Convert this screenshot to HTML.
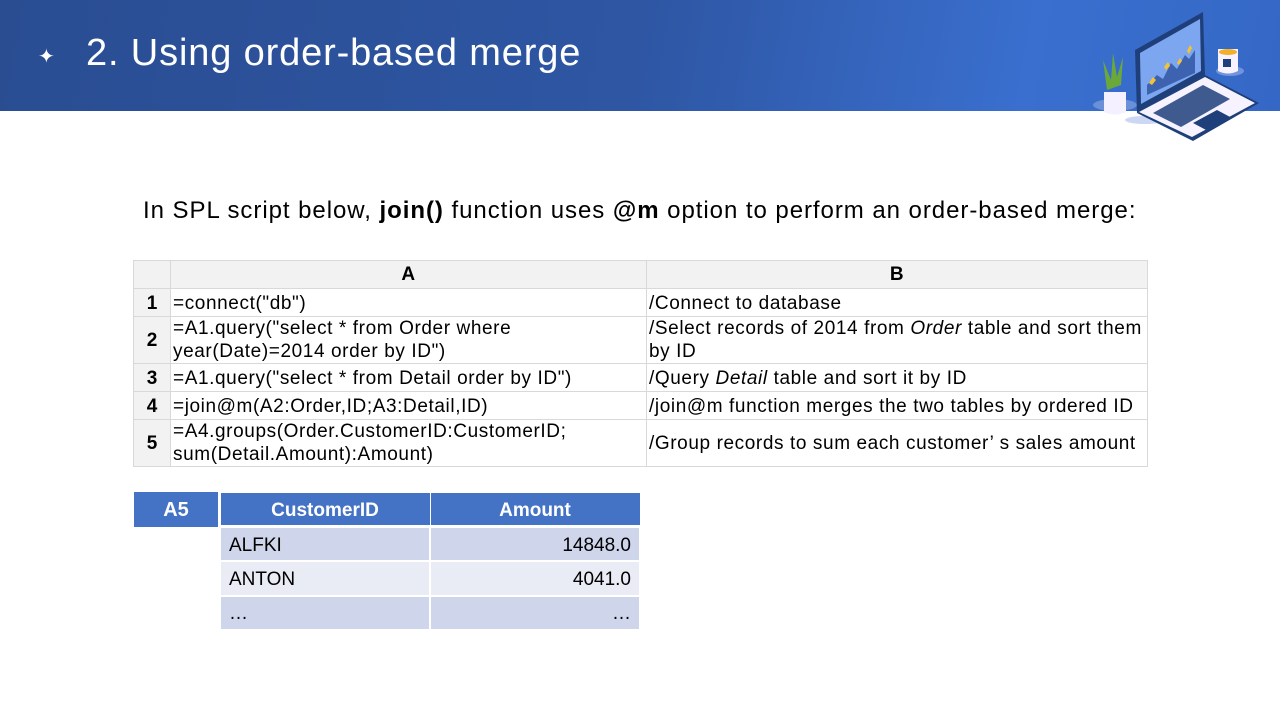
<!DOCTYPE html>
<html><head><meta charset="utf-8"><style>
*{margin:0;padding:0;box-sizing:border-box}
body{width:1280px;height:720px;background:#fff;position:relative;overflow:hidden;font-family:"Liberation Sans","Noto Sans CJK SC",sans-serif;color:#000}
.hdr{position:absolute;left:0;top:0;width:1280px;height:111px;background:linear-gradient(100deg,#2a4d92 0%,#2e56a3 50%,#3a6fcf 80%,#3568c6 100%)}
.title{position:absolute;left:86px;top:32px;color:#fff;font-size:38px;white-space:nowrap;letter-spacing:0.85px}
.star{position:absolute;left:38px;top:44px;color:#fff;font-size:20px}
.intro{position:absolute;left:143px;top:197px;font-size:24px;white-space:nowrap;letter-spacing:0.95px}
table{border-collapse:collapse;position:absolute}
.spl{left:133px;top:260px;width:1014px;font-size:19px;letter-spacing:0.6px;table-layout:fixed}
.spl td{border:1px solid #d9d9d9;padding:0 2px;line-height:23px;vertical-align:middle;white-space:nowrap;overflow:hidden}
.spl .h td{background:#f2f2f2;font-weight:bold;text-align:center;height:28px}
.spl td.n{background:#f2f2f2;font-weight:bold;text-align:center;letter-spacing:0}
.r td{height:28px;padding-top:2px}
.r2 td{height:46px}
.a5{position:absolute;left:134px;top:492px;width:84px;height:35px;background:#4472c4;color:#fff;font-weight:bold;font-size:20px;text-align:center;line-height:36px}
.res{left:219px;top:492px;font-size:19px}
.res td{width:210px;height:34.5px;border:2px solid #fff;padding:3px 8px 0}
.res th{background:#4472c4;color:#fff;font-size:19px;height:34px;border:1px solid #fff;border-bottom:3px solid #fff;padding-top:4px}
.o td{background:#cfd5ea}.e td{background:#e9ebf5}
</style></head><body>
<div class="hdr"></div>
<div class="star">✦</div>
<div class="title">2. Using order-based merge</div>
<svg style="position:absolute;left:1085px;top:5px" width="175" height="138" viewBox="0 0 175 138">
<ellipse cx="30" cy="100" rx="22" ry="6" fill="#8fa8e0" opacity=".6"/>
<path d="M22 85 L18 55 L26 75 L28 48 L32 72 L38 52 L36 80 Z" fill="#6aa83a"/>
<path d="M19 87 h22 v20 q-11 5 -22 0 Z" fill="#f4f0ff"/>
<ellipse cx="60" cy="115" rx="20" ry="4" fill="#9ab0e8" opacity=".5"/>
<path d="M50 45 L118 7 L120 70 L52 108 Z" fill="#1f3f7a"/>
<path d="M55 48 L115 14 L116 66 L56 99 Z" fill="#7ca7f0"/>
<path d="M62 80 L72 70 L78 74 L86 58 L92 64 L100 50 L104 54 L110 45 L110 68 L62 90Z" fill="#3d62b0"/>
<path d="M64 78 l4-6 3 3 -4 5Z M79 62 l4-5 2 4 -4 4Z M92 58 l3-5 2 3 -3 4Z M102 46 l3-6 2 3 -3 6Z" fill="#f5c232"/>
<path d="M52 108 L120 70 L174 98 L108 136 Z" fill="#1f3f7a"/>
<path d="M54 107 L120 72 L170 98 L107 132 Z" fill="#f6f2ff"/>
<path d="M68 108 L118 80 L145 94 L96 122 Z" fill="#1f3f7a" opacity=".85"/>
<path d="M108 118 L132 105 L147 113 L123 126 Z" fill="#1f3f7a"/>
<ellipse cx="145" cy="66" rx="14" ry="5" fill="#9ab0e8" opacity=".6"/>
<path d="M133 44 h20 v22 q-10 5 -20 0 Z" fill="#f6f2ff"/>
<ellipse cx="143" cy="47" rx="9" ry="3" fill="#f2b02a"/>
<rect x="138" y="54" width="8" height="8" fill="#1f3f7a"/>
</svg>
<div class="intro">In SPL script below, <b>join()</b> function uses <b>@m</b> option to perform an order-based merge:</div>
<table class="spl">
<colgroup><col style="width:37px"><col style="width:476px"><col style="width:501px"></colgroup>
<tr class="h"><td></td><td>A</td><td>B</td></tr>
<tr class="r"><td class="n">1</td><td>=connect("db")</td><td>/Connect to database</td></tr>
<tr class="r2"><td class="n">2</td><td>=A1.query("select * from Order where<br>year(Date)=2014 order by ID")</td><td>/Select records of 2014 from <i>Order</i> table and sort them<br>by ID</td></tr>
<tr class="r"><td class="n">3</td><td>=A1.query("select * from Detail order by ID")</td><td>/Query <i>Detail</i> table and sort it by ID</td></tr>
<tr class="r"><td class="n">4</td><td>=join@m(A2:Order,ID;A3:Detail,ID)</td><td>/join@m function merges the two tables by ordered ID</td></tr>
<tr class="r2"><td class="n">5</td><td>=A4.groups(Order.CustomerID:CustomerID;<br>sum(Detail.Amount):Amount)</td><td>/Group records to sum each customer’ s sales amount</td></tr>
</table>
<div class="a5">A5</div>
<table class="res">
<tr><th style="width:210px">CustomerID</th><th style="width:209px">Amount</th></tr>
<tr class="o"><td>ALFKI</td><td style="text-align:right">14848.0</td></tr>
<tr class="e"><td>ANTON</td><td style="text-align:right">4041.0</td></tr>
<tr class="o"><td>…</td><td style="text-align:right">…</td></tr>
</table>
</body></html>
